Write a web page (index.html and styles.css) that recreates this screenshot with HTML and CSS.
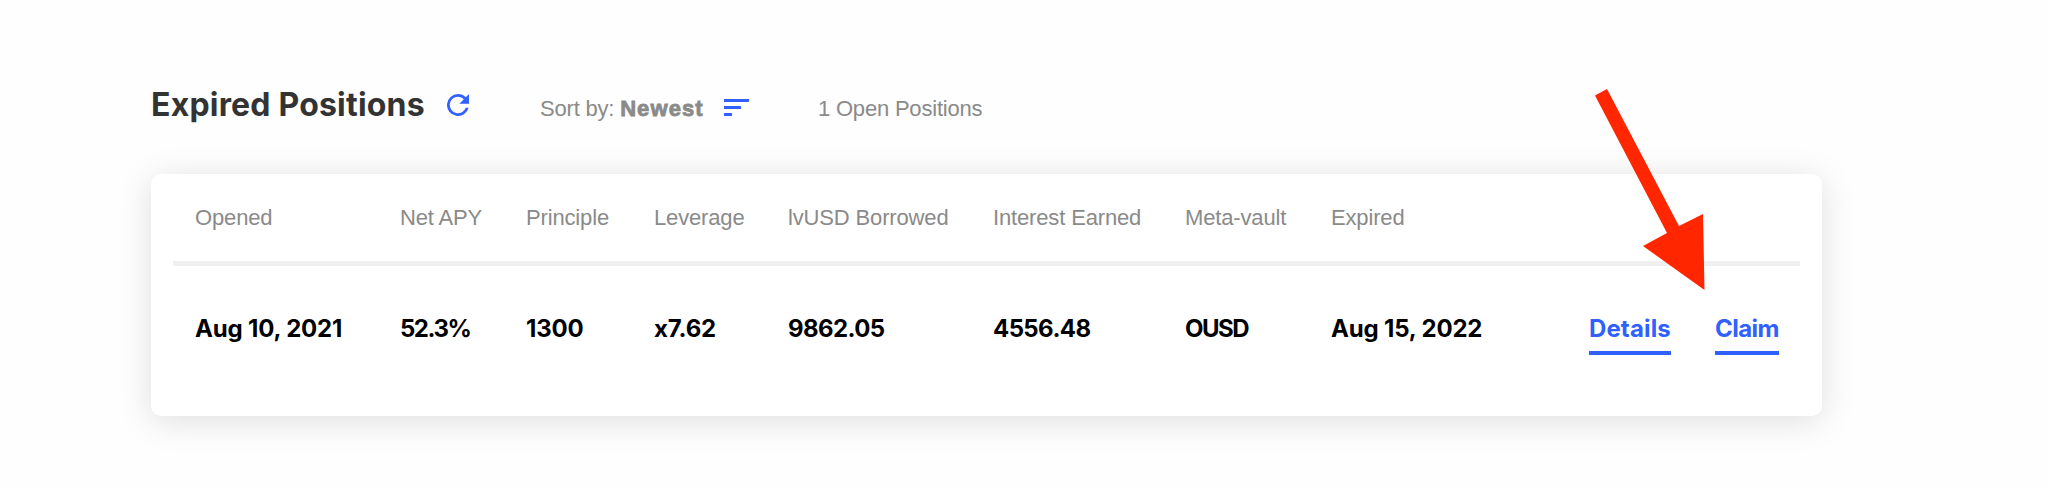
FILE: index.html
```html
<!DOCTYPE html>
<html lang="en">
<head>
    <meta charset="UTF-8">
    <meta name="viewport" content="width=device-width, initial-scale=1.0">
    <title>Expired Positions</title>
    <link rel="stylesheet" href="styles.css">
</head>
<body>
    <div class="page">
        <div class="heading">
            <h2 class="title">Expired Positions</h2>
            <svg class="refresh" viewBox="4 4 16 16">
                <path d="M17.65 6.35A7.96 7.96 0 0 0 12 4a8 8 0 1 0 7.73 10h-2.08A6 6 0 1 1 12 6c1.66 0 3.14.69 4.22 1.78L13 11h7V4z"/>
            </svg>
            <div class="sort">Sort by: <strong>Newest</strong></div>
            <svg class="sort-icon" viewBox="0 0 25 17">
                <path d="M0 0h25v3H0zM0 7h17v3H0zM0 14h8v3H0z"/>
            </svg>
            <div class="count">1 Open Positions</div>
        </div>

        <div class="card">
            <table class="positions">
                <colgroup>
                    <col class="w-opened">
                    <col class="w-apy">
                    <col class="w-principle">
                    <col class="w-leverage">
                    <col class="w-borrowed">
                    <col class="w-interest">
                    <col class="w-vault">
                    <col class="w-expired">
                    <col>
                </colgroup>
                <thead>
                    <tr>
                        <th>Opened</th>
                        <th>Net APY</th>
                        <th>Principle</th>
                        <th>Leverage</th>
                        <th>lvUSD Borrowed</th>
                        <th>Interest Earned</th>
                        <th>Meta-vault</th>
                        <th>Expired</th>
                        <th></th>
                    </tr>
                </thead>
                <tbody>
                    <tr>
                        <td>Aug 10, 2021</td>
                        <td class="tight">52.3%</td>
                        <td>1300</td>
                        <td>x7.62</td>
                        <td class="amount">9862.05</td>
                        <td class="amount">4556.48</td>
                        <td class="tight">OUSD</td>
                        <td>Aug 15, 2022</td>
                        <td>
                            <div class="actions">
                                <a class="link details">Details</a>
                                <a class="link claim">Claim</a>
                            </div>
                        </td>
                    </tr>
                </tbody>
            </table>
        </div>
    </div>

    <!-- arrow pointing at the claim link -->
    <svg class="arrow" viewBox="0 0 110 201">
        <path d="M0 6.5L12 0L84 137L108 125L109.500 201L48 157L72 144Z"/>
    </svg>
</body>
</html>
```

FILE: styles.css
```css
body {
    margin: 0;
    min-height: 488px;
    background-color: #fefefe;
    font-family: "Liberation Sans", Arial, sans-serif;
    color: #8a8a8a;
}

.page {
    box-sizing: border-box;
    width: 1822px;
    height: 488px;
    padding: 84px 0 0 151px;
}

.heading {
    display: flex;
    align-items: baseline;
    height: 90px;
    font-size: 22px;
    line-height: 42px;
    letter-spacing: -0.2px;
    white-space: nowrap;
}

.title {
    width: 296px;
    margin: 0;
    font-family: Inter, sans-serif;
    font-size: 32px;
    font-weight: 700;
    letter-spacing: 0.2px;
    color: #333;
}

.refresh {
    width: 22px;
    height: 22px;
    fill: #3060ff;
}

.sort {
    width: 184px;
    margin-left: 71px;
}

.sort strong {
    letter-spacing: 1.1px;
    -webkit-text-stroke: 0.8px #8a8a8a;
}

.sort-icon {
    width: 25px;
    height: 17px;
    fill: #3060ff;
}

.count {
    margin-left: 69px;
}

.card {
    box-sizing: border-box;
    height: 242px;
    padding: 0 22px;
    background-color: #fff;
    border-radius: 10px;
    box-shadow: 0 5px 34px rgba(0, 0, 0, 0.13);
}

.positions {
    width: 100%;
    table-layout: fixed;
    border-collapse: separate;
    border-spacing: 0;
    white-space: nowrap;
    text-align: left;
}

.positions th {
    height: 87px;
    padding: 0 0 0 22px;
    border-bottom: 5px solid #f0f0f0;
    font-size: 22px;
    font-weight: 400;
    letter-spacing: -0.15px;
}

.positions td {
    height: 125px;
    padding: 0 0 0 22px;
    font-family: Inter, sans-serif;
    font-size: 24px;
    font-weight: 700;
    letter-spacing: -0.17px;
    color: #000;
}

.positions .amount {
    letter-spacing: -0.6px;
}

.positions .tight {
    letter-spacing: -1.5px;
}

.w-opened { width: 205px; }
.w-apy { width: 126px; }
.w-principle { width: 128px; }
.w-leverage { width: 134px; }
.w-borrowed { width: 205px; }
.w-interest { width: 192px; }
.w-vault { width: 146px; }
.w-expired { width: 216px; }

.actions {
    display: flex;
    justify-content: flex-end;
    gap: 44px;
    padding-right: 21px;
}

.link {
    padding: 12px 0 8px;
    border-bottom: 4px solid #3060ff;
    color: #3060ff;
}

.details {
    letter-spacing: 0.15px;
}

.claim {
    letter-spacing: -0.5px;
}

.arrow {
    position: absolute;
    left: 1595px;
    top: 89px;
    width: 110px;
    height: 201px;
    fill: #ff2600;
}
```
